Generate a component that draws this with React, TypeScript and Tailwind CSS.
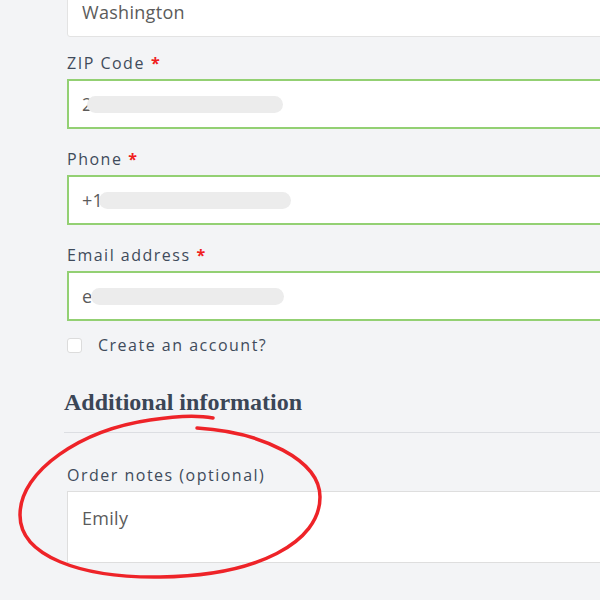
import React from "react";

const labelCls =
  "text-[16px] leading-[20px] tracking-[1.5px] text-[#3f4b5b] font-['Open_Sans',sans-serif] font-medium";
const inputTextCls =
  "text-[18px] tracking-[0.3px] text-[#5b5b5b] font-['Open_Sans',sans-serif]";

function Label({ text, required }: { text: string; required?: boolean }) {
  return (
    <div className={`${labelCls} h-[20px] flex items-center`}>
      <span>{text}</span>
      {required && <span className="ml-[6px] text-[#f01e1e] font-bold">*</span>}
    </div>
  );
}

function BlurField({ prefix, pillWidth, pillOffset }: { prefix: string; pillWidth: number; pillOffset: string }) {
  return (
    <div className="h-[50px] w-[560px] bg-white border-2 border-[#93d073] flex items-center pl-[13px]">
      <span className={inputTextCls}>{prefix}</span>
      <span
        className={`inline-block h-[17px] rounded-full bg-[#ececec] ${pillOffset}`}
        style={{ width: pillWidth }}
      />
    </div>
  );
}

export default function App() {
  return (
    <div className="relative w-[600px] h-[600px] overflow-hidden bg-[#f3f4f6]">
      <div className="flex flex-col pl-[67px] pt-0 -mt-[13px]">
        <div className="h-[50px] w-[560px] bg-white border border-[#e3e3e3] rounded-[3px] flex items-center pl-[14px]">
          <span className={inputTextCls}>Washington</span>
        </div>

        <div className="mt-[16px] mb-[6px]">
          <Label text="ZIP Code" required />
        </div>
        <BlurField prefix="2" pillWidth={196} pillOffset="-ml-[6px]" />

        <div className="mt-[20px] mb-[6px]">
          <Label text="Phone" required />
        </div>
        <BlurField prefix="+1" pillWidth={192} pillOffset="-ml-[4px]" />

        <div className="mt-[20px] mb-[6px]">
          <Label text="Email address" required />
        </div>
        <BlurField prefix="e" pillWidth={193} pillOffset="-ml-[1px]" />

        <div className="mt-[14px] flex items-center h-[20px]">
          <span className="w-[15px] h-[15px] bg-white border border-[#dcdcdc] rounded-[3px]" />
          <span className={`${labelCls} ml-[16px]`}>Create an account?</span>
        </div>

        <div className="mt-[33px] -ml-[3px] text-[24px] leading-[28px] font-bold text-[#3b4656] font-['Liberation_Serif',serif]">
          Additional information
        </div>
        <div className="mt-[16px] -ml-[3px] h-px bg-[#dcdee2]" />

        <div className="mt-[32px] mb-[6px]">
          <Label text="Order notes (optional)" />
        </div>
        <div className="h-[72px] w-[560px] bg-white border border-[#dedede] pl-[14px] pt-[13px]">
          <span className={inputTextCls}>Emily</span>
        </div>
      </div>

      <svg
        className="absolute left-0 top-0 pointer-events-none"
        width="600"
        height="600"
        viewBox="0 0 600 600"
      >
        <path
          d="M197,428 C262,432 320,460 320,497 C320,542 258,576 160,577 C80,578 20,556 20,515 C20,470 82,430 150,420 C175,416 198,415 213,418"
          fill="none"
          stroke="#ee2328"
          strokeWidth="3.5"
          strokeLinecap="round"
        />
      </svg>
    </div>
  );
}
